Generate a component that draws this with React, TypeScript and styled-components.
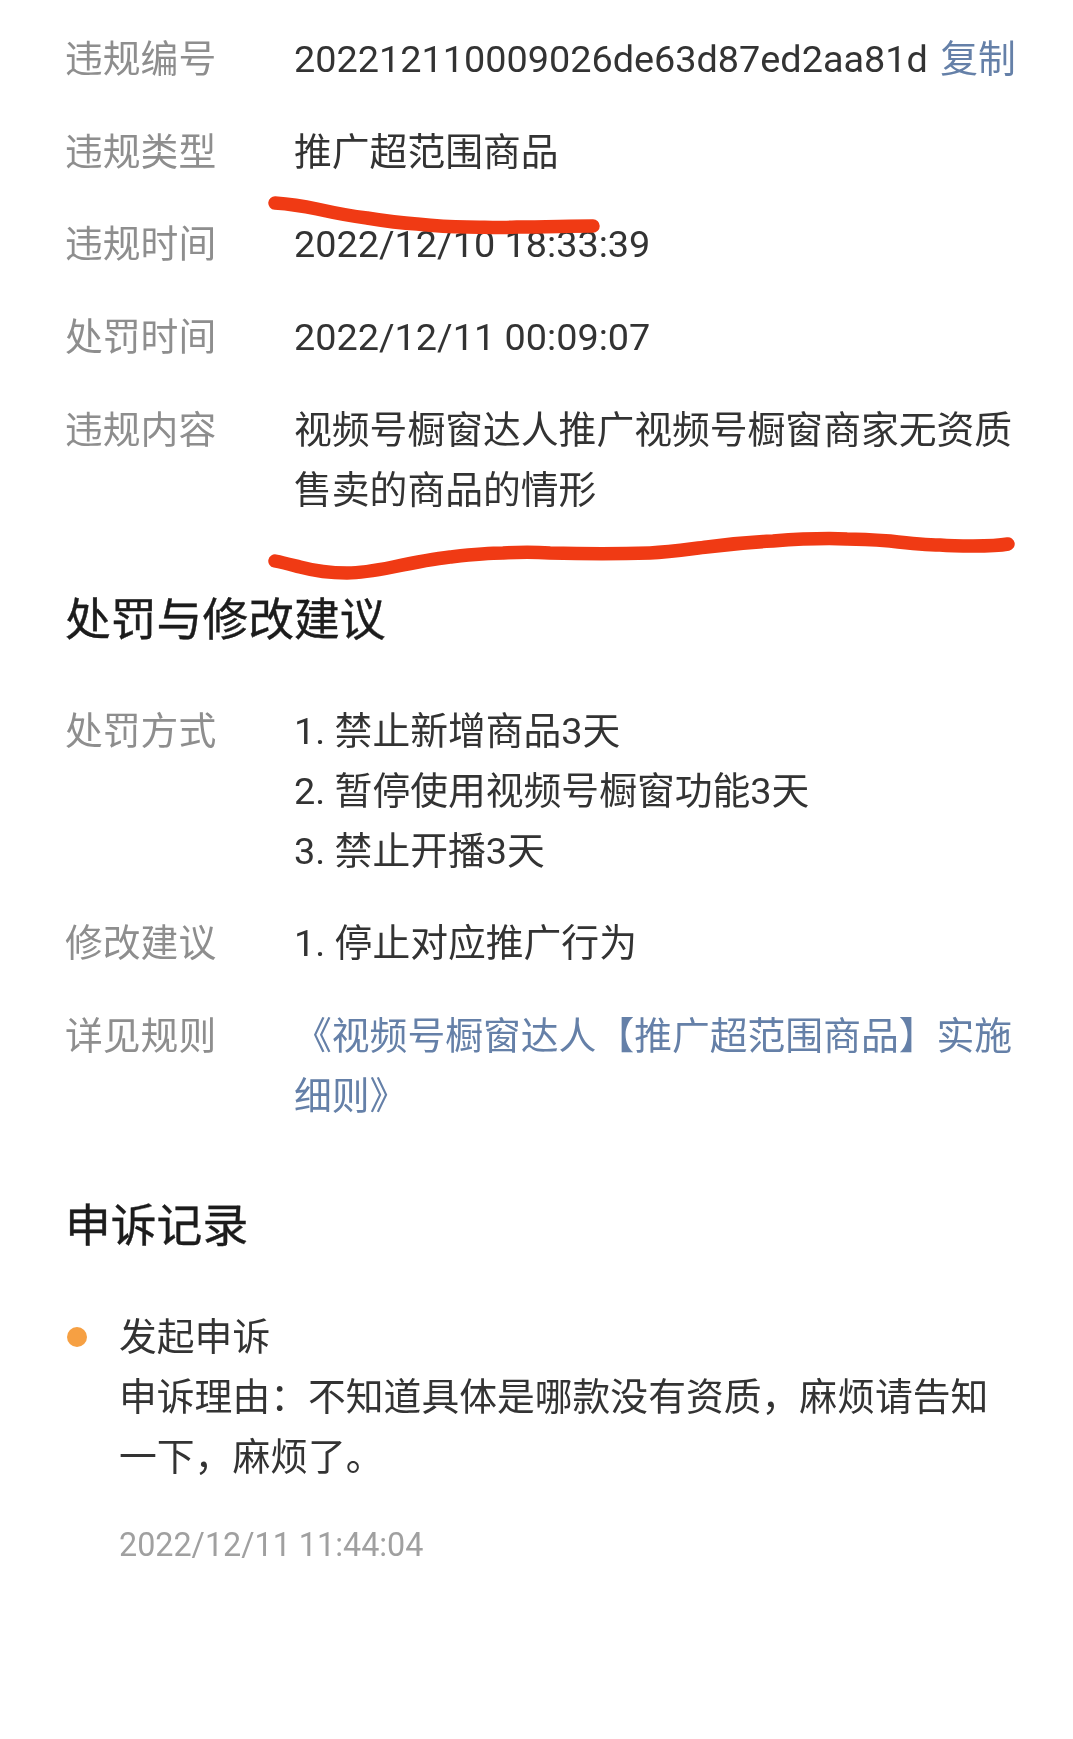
import React from 'react';
import styled, { createGlobalStyle } from 'styled-components';

const GlobalStyle = createGlobalStyle`
    body {
        margin: 0;
        background: #fff;
        font-family: Roboto, "Noto Sans CJK SC", sans-serif;
    }
`;

const Page = styled.main`
    position: relative;
    width: 1073px;
    height: 1739px;
    padding: 29px 0 0 65px;
    box-sizing: border-box;
    overflow: hidden;
    filter: blur(0.6px);
`;

const RowList = styled.div`
    display: flex;
    flex-direction: column;
    gap: 32.7px;
`;

const Row = styled.div`
    display: flex;
    font-size: 37.8px;
    line-height: 60px;
`;

const Label = styled.div`
    flex: 0 0 229px;
    color: #8e8e8e;
`;

const Value = styled.div`
    width: 725px;
    color: #333;
`;

const Id = styled.span`
    white-space: nowrap;
`;

const Link = styled.a`
    color: #6580a8;
    text-decoration: none;
`;

const CopyLink = styled(Link)`
    margin-left: 12.5px;
`;

const Heading = styled.h2`
    margin: 71px 0 50px;
    font-size: 45.8px;
    line-height: 60px;
    font-weight: 400;
    color: #1c1c1c;
    -webkit-text-stroke: 0.4px #1c1c1c;
`;

const Entry = styled.div`
    display: flex;
    gap: 32px;
    padding-left: 2px;
`;

const Dot = styled.span`
    flex: none;
    width: 20px;
    height: 20px;
    margin-top: 20px;
    border-radius: 50%;
    background: #f6a043;
`;

const EntryBody = styled.div`
    width: 880px;
    font-size: 37.8px;
    line-height: 60px;
    color: #333;
`;

const EntryTime = styled.div`
    margin-top: 28px;
    font-size: 32.3px;
    color: #a0a0a0;
`;

const Marks = styled.svg`
    position: absolute;
    left: 0;
    top: 0;
    width: 1073px;
    height: 1739px;
    pointer-events: none;
`;

const Mark = styled.path`
    fill: none;
    stroke: #f03a14;
    stroke-width: 13.5px;
    stroke-linecap: round;
    stroke-linejoin: round;
`;

const violation = [
    { label: '违规类型', value: '推广超范围商品' },
    { label: '违规时间', value: '2022/12/10 18:33:39' },
    { label: '处罚时间', value: '2022/12/11 00:09:07' },
    { label: '违规内容', value: '视频号橱窗达人推广视频号橱窗商家无资质售卖的商品的情形' },
];

export default function App() {
    return (
        <Page>
            <GlobalStyle />
            <RowList>
                <Row>
                    <Label>违规编号</Label>
                    <Value>
                        <Id>202212110009026de63d87ed2aa81d</Id>
                        <CopyLink>复制</CopyLink>
                    </Value>
                </Row>
                {violation.map((row) => (
                    <Row key={row.label}>
                        <Label>{row.label}</Label>
                        <Value>{row.value}</Value>
                    </Row>
                ))}
            </RowList>

            <Heading>处罚与修改建议</Heading>
            <RowList>
                <Row>
                    <Label>处罚方式</Label>
                    <Value>
                        <div>1. 禁止新增商品3天</div>
                        <div>2. 暂停使用视频号橱窗功能3天</div>
                        <div>3. 禁止开播3天</div>
                    </Value>
                </Row>
                <Row>
                    <Label>修改建议</Label>
                    <Value>1. 停止对应推广行为</Value>
                </Row>
                <Row>
                    <Label>详见规则</Label>
                    <Value>
                        <Link>《视频号橱窗达人【推广超范围商品】实施细则》</Link>
                    </Value>
                </Row>
            </RowList>

            <Heading>申诉记录</Heading>
            <Entry>
                <Dot />
                <EntryBody>
                    <div>发起申诉</div>
                    <div>申诉理由：不知道具体是哪款没有资质，麻烦请告知一下，麻烦了。</div>
                    <EntryTime>2022/12/11 11:44:04</EntryTime>
                </EntryBody>
            </Entry>

            {/* red pen strokes drawn over the screenshot */}
            <Marks viewBox="0 0 1073 1739">
                <Mark d="M275 203 C290 204 303 206 317 209 C335 213 350 216 367 218 C385 221 400 223 417 224 C435 226 450 227 467 227 C485 227 500 228 517 227 C545 227 570 226 593 226" />
                <Mark d="M275 561 C285 563 292 565 300 567 C315 571 330 573 347 573 C362 573 378 570 393 567 C412 563 432 559 450 557 C468 555 485 553 503 553 C520 552 535 552 550 553 C585 554 620 554 650 553 C670 552 690 549 707 547 C730 544 752 542 773 541 C800 539 825 538 847 539 C862 539 876 540 890 541 C907 543 924 545 940 545 C952 546 962 546 973 546 C985 546 997 546 1008 544" />
            </Marks>
        </Page>
    );
}
